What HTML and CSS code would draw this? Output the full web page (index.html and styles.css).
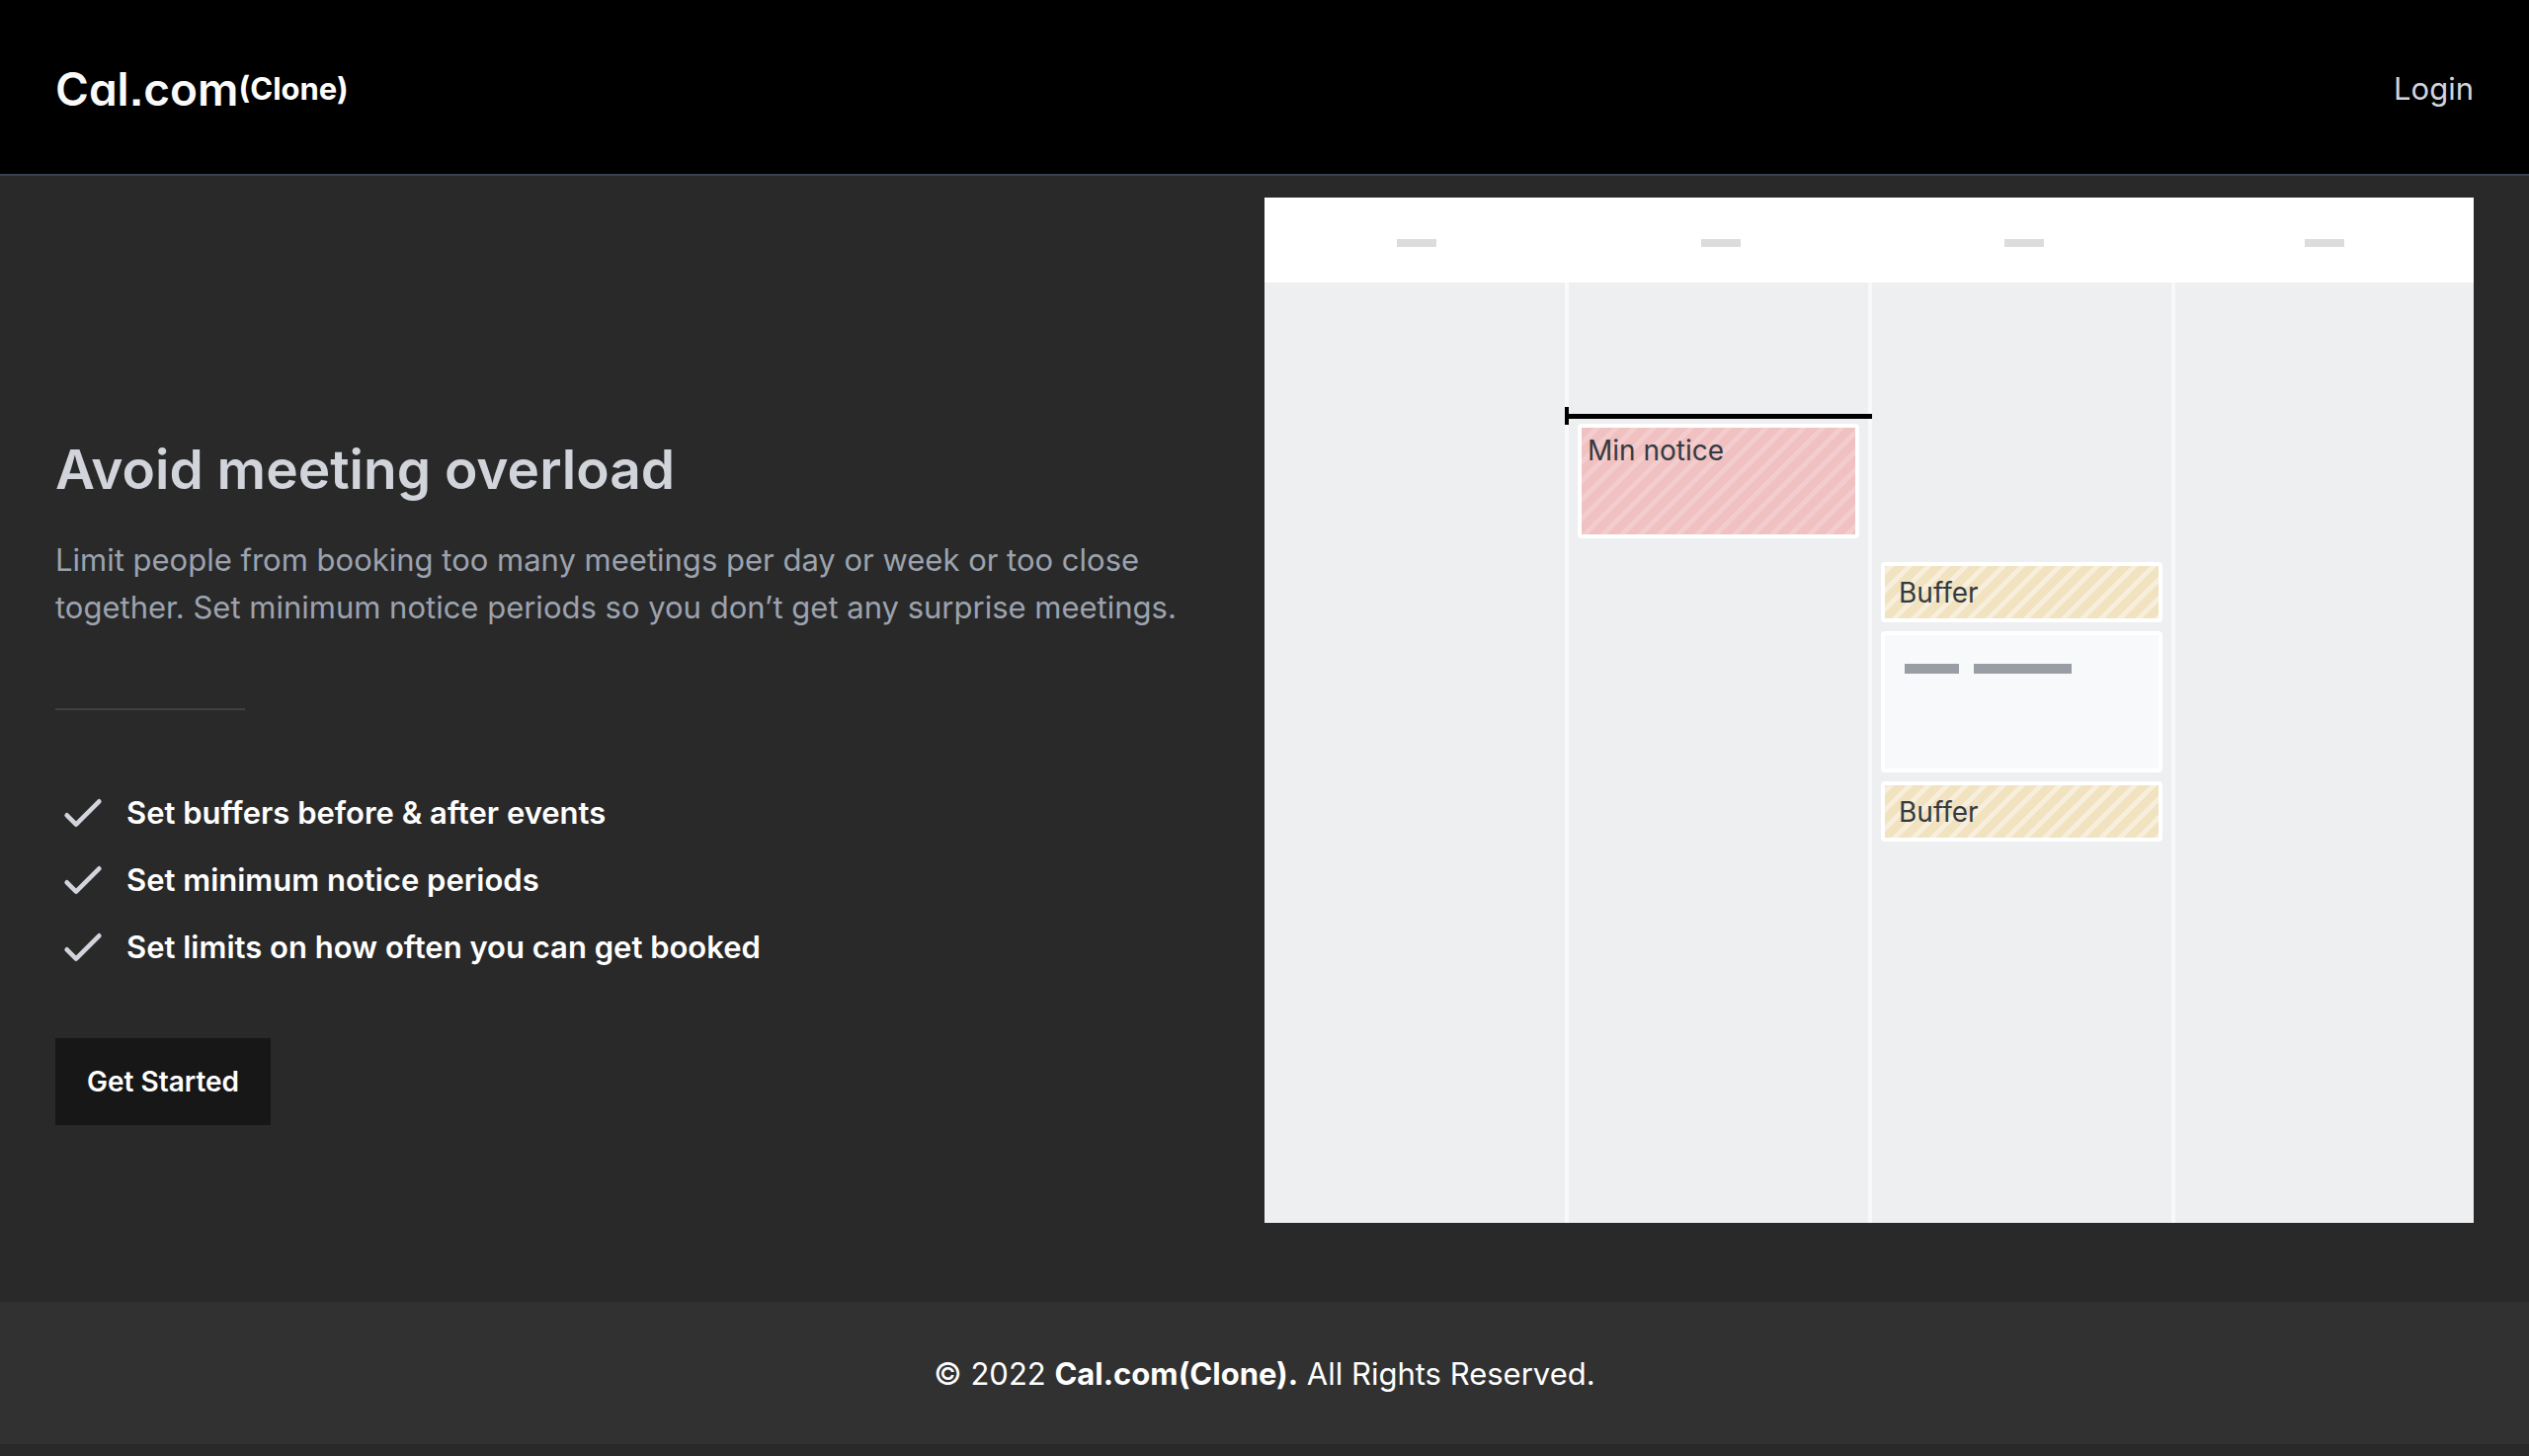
FILE: index.html
```html
<!DOCTYPE html>
<html lang="en">
<head>
  <meta charset="utf-8">
  <meta name="viewport" content="width=device-width, initial-scale=1">
  <title>Cal.com (Clone)</title>
  <link rel="stylesheet" href="styles.css">
</head>
<body>
  <header class="site-header">
    <a class="brand" href="#"><span class="brand-name">Cal.com</span><span class="brand-suffix">(Clone)</span></a>
    <a class="login" href="#">Login</a>
  </header>

  <main class="hero">
    <section class="intro">
      <h1>Avoid meeting overload</h1>
      <p class="lead">Limit people from booking too many meetings per day or week or too close together. Set minimum notice periods so you don’t get any surprise meetings.</p>
      <hr class="rule">
      <ul class="features">
        <li><svg class="check" viewBox="0 0 24 24" aria-hidden="true"><path d="M5 13l4 4L19 7"/></svg>Set buffers before &amp; after events</li>
        <li><svg class="check" viewBox="0 0 24 24" aria-hidden="true"><path d="M5 13l4 4L19 7"/></svg>Set minimum notice periods</li>
        <li><svg class="check" viewBox="0 0 24 24" aria-hidden="true"><path d="M5 13l4 4L19 7"/></svg>Set limits on how often you can get booked</li>
      </ul>
      <button class="cta" type="button">Get Started</button>
    </section>

    <section class="calendar" aria-label="Calendar preview">
      <div class="day">
        <div class="day-head"><span class="day-name"></span></div>
      </div>
      <div class="day">
        <div class="day-head"><span class="day-name"></span></div>
        <div class="day-body day-body-notice">
          <div class="now-line"></div>
          <div class="event notice">Min notice</div>
        </div>
      </div>
      <div class="day">
        <div class="day-head"><span class="day-name"></span></div>
        <div class="day-body day-body-buffers">
          <div class="event buffer">Buffer</div>
          <div class="event meeting"><span class="bar bar-short"></span><span class="bar bar-long"></span></div>
          <div class="event buffer">Buffer</div>
        </div>
      </div>
      <div class="day">
        <div class="day-head"><span class="day-name"></span></div>
      </div>
    </section>
  </main>

  <footer class="site-footer">© 2022 <strong>Cal.com(Clone).</strong> All Rights Reserved.</footer>
</body>
</html>
```

FILE: styles.css
```css
* {
  box-sizing: border-box;
}

body {
  margin: 0;
  background: #292929;
  color: #fff;
  font-family: Inter, "Liberation Sans", sans-serif;
  font-size: 31px;
  line-height: 48px;
}

a {
  color: inherit;
  text-decoration: none;
}

.site-header {
  display: flex;
  align-items: center;
  justify-content: space-between;
  padding: 58px 56px 54px;
  background: #000;
  border-bottom: 2px solid #374151;
}

.brand {
  display: flex;
  align-items: center;
  height: 64px;
}

.brand-name {
  color: #fafafa;
  font-size: 46px;
  font-weight: 600;
  font-feature-settings: "cv11", "ss03", "ss07";
}

.brand-suffix {
  font-weight: 700;
}

.login {
  color: #d1d5db;
}

.hero {
  display: grid;
  grid-template-columns: 1fr 1fr;
  padding: 22px 56px 80px;
}

.intro {
  display: flex;
  flex-direction: column;
  align-items: flex-start;
  justify-content: center;
  padding: 140px 48px 0 0;
}

h1 {
  margin: 0 0 32px;
  color: #d1d5db;
  font-size: 55px;
  font-weight: 600;
  line-height: 72px;
}

.lead {
  margin: 0;
  color: #9ca3af;
}

.rule {
  width: 192px;
  height: 2px;
  margin: 78px 0 76px;
  border: 0;
  background: #404040;
}

.features {
  display: flex;
  flex-direction: column;
  gap: 12px;
  margin: 0 0 64px;
  padding: 0;
  list-style: none;
  font-weight: 600;
}

.features li {
  display: flex;
  align-items: center;
  gap: 16px;
}

.check {
  width: 56px;
  height: 56px;
  fill: none;
  stroke: #d1d5db;
  stroke-width: 2;
  stroke-linecap: round;
  stroke-linejoin: round;
}

.cta {
  padding: 20px 32px;
  border: 0;
  background: #171717;
  color: #fff;
  font: inherit;
  font-size: 28px;
  font-weight: 600;
}

.calendar {
  display: grid;
  grid-template-columns: 308fr 307fr 307fr 302fr;
  min-height: 1038px;
  background: #eeeff1;
  color: #343a40;
}

.day {
  border-right: 4px solid #f8f9fb;
}

.day:last-child {
  border-right: 0;
}

.day-head {
  display: flex;
  align-items: center;
  justify-content: center;
  height: 86px;
  margin-right: -4px;
  padding-top: 6px;
  background: #fff;
}

.day:last-child .day-head {
  margin-right: 0;
}

.day-name {
  width: 40px;
  height: 8px;
  background: #dcdcdc;
}

.day-body {
  display: flex;
  flex-direction: column;
  padding: 0 9px;
}

.day-body-notice {
  position: relative;
  padding-top: 143px;
}

.day-body-buffers {
  gap: 9px;
  padding-top: 283px;
}

.now-line {
  position: absolute;
  top: 126px;
  right: -4px;
  left: -4px;
  height: 18px;
  border-left: 4px solid #000;
  background: linear-gradient(#000, #000) 0 7px / 100% 5px no-repeat;
}

.event {
  border: 4px solid #fff;
  border-radius: 4px;
  font-size: 28px;
}

.notice {
  height: 116px;
  padding: 0 6px;
  background: linear-gradient(135deg, #f3cccd 0 20%, #f1c0c1 20% 50%, #f3cccd 50% 70%, #f1c0c1 70%) 12px 0 / 19px 19px;
  line-height: 46px;
}

.buffer {
  height: 61px;
  padding: 3px 14px;
  background: linear-gradient(135deg, #f7eedb 0 20%, #f1e2c0 20% 50%, #f7eedb 50% 70%, #f1e2c0 70%) 2px 0 / 19px 19px;
}

.meeting {
  display: flex;
  gap: 15px;
  height: 143px;
  padding: 29px 20px;
  background: #f8f9fb;
}

.bar {
  height: 10px;
  background: #999da4;
}

.bar-short {
  width: 55px;
}

.bar-long {
  width: 99px;
}

.site-footer {
  margin-bottom: 12px;
  padding: 49px 48px 47px;
  background: #313131;
  text-align: center;
}
```
